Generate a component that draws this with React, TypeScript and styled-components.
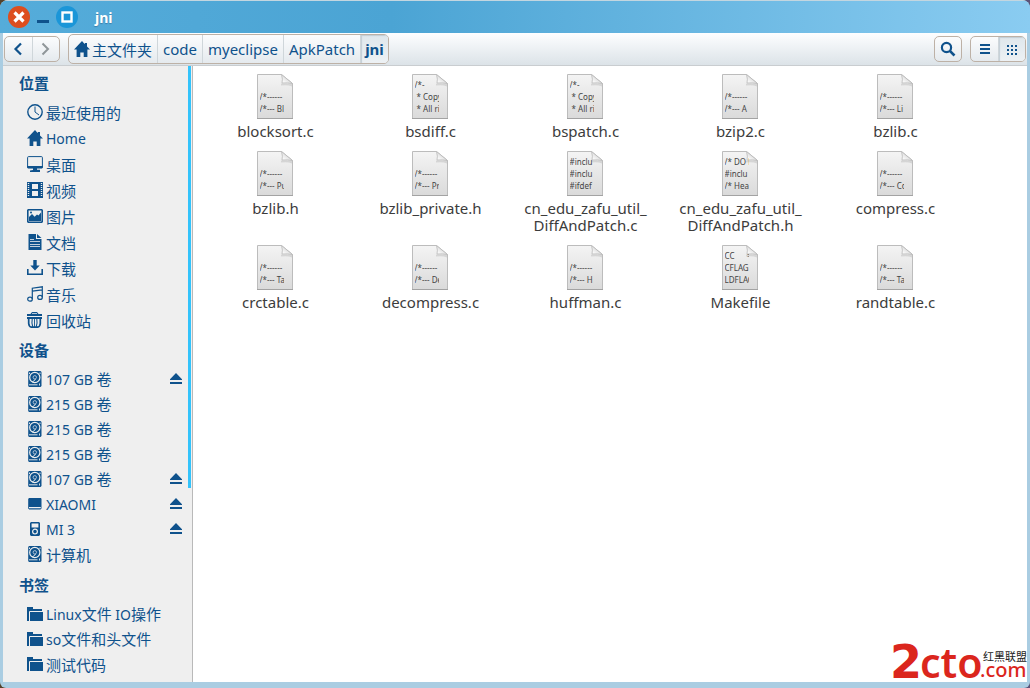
import React from 'react';
import styled, { createGlobalStyle, css } from 'styled-components';

const INK = '#0f528c';
const FRAME = '#aacde2';

const GlobalStyle = createGlobalStyle`
  * { box-sizing: border-box; }
  body {
    margin: 0;
    background: linear-gradient(90deg, #54422a, #5b5378);
    font-family: "Noto Sans", "Noto Sans CJK SC", sans-serif;
    font-size: 15px;
    color: ${INK};
  }
  button, a { font: inherit; color: inherit; text-decoration: none; }
  button { padding: 0; margin: 0; border: 0; background: none; }
  ul { list-style: none; margin: 0; padding: 0; }
  svg { display: block; flex: none; }
`;

const Window = styled.div`
  position: relative;
  display: flex;
  flex-direction: column;
  min-height: 100vh;
  background: ${FRAME};
  border-radius: 8px 8px 6px 6px;
  overflow: hidden;
`;

const TitleBar = styled.header`
  display: flex;
  align-items: center;
  height: 33px;
  padding-left: 8px;
  border-top: 1px solid #c3d6e0;
  background: linear-gradient(90deg, #55acda 0%, #4ba4d4 38%, #8accf1 100%);
`;

const WindowButton = styled.button<{ $bg?: string }>`
  display: flex;
  align-items: center;
  justify-content: center;
  width: 22px;
  height: 22px;
  border-radius: 50%;
  background: ${p => p.$bg || 'transparent'};
  & + & { margin-left: 2px; }
`;

const Title = styled.h1`
  margin: 0 0 0 17px;
  font-size: 14px;
  font-weight: 700;
  color: #fff;
  text-shadow: 0 1px 1px #3b7fa9;
`;

const Toolbar = styled.div`
  display: flex;
  align-items: center;
  height: 33px;
  margin: 0 3px;
  padding: 0 1px;
  border-bottom: 1px solid #c9cdd0;
  background: linear-gradient(#fdfeff, #dce3e8);
`;

const Group = styled.div<{ $tall?: boolean }>`
  display: flex;
  height: ${p => (p.$tall ? 30 : 26)}px;
  border: 1px solid #bdb1a6;
  border-radius: 5px;
  overflow: hidden;
  background: linear-gradient(#fbfcfd, #e5eaee);
`;

const Crumbs = styled.nav`
  margin: 0 auto 0 8px;
`;

const segment = css<{ $active?: boolean }>`
  display: flex;
  align-items: center;
  justify-content: center;
  & + & { border-left: 1px solid #cfd6da; }
  ${p => p.$active && css`
    background: linear-gradient(#dfe7ec, #edf1f4);
    box-shadow: inset 1px 1px 1px #c3ced5;
  `}
`;

const Crumb = styled.a<{ $active?: boolean }>`
  ${segment}
  gap: 2px;
  padding: 0 ${p => (p.$active ? 4 : 5)}px;
  font-weight: ${p => (p.$active ? 700 : 400)};
`;

const ToolButton = styled.button<{ $active?: boolean; $narrow?: boolean }>`
  ${segment}
  width: ${p => (p.$narrow ? 26 : 27)}px;
`;

const Tools = styled.div`
  display: flex;
  gap: 8px;
`;

const Body = styled.div`
  display: flex;
  flex: 1;
  margin: 0 3px 6px;
`;

const Sidebar = styled.aside`
  flex: none;
  width: 185px;
  background: #efefef;
`;

const ScrollTrack = styled.div`
  flex: none;
  width: 5px;
  background: #efefef;
  border-right: 1px solid #b9b9b9;
`;

const ScrollThumb = styled.div`
  width: 3px;
  height: calc(100% - 194px);
  background: #33c3fb;
`;

const Section = styled.section`
  &:last-child { padding-top: 1px; }
`;

const SectionTitle = styled.h2`
  margin: 0;
  padding: 2px 0 0 16px;
  font-size: 15px;
  line-height: 31px;
  font-weight: 700;
`;

const Row = styled.li<{ $tall?: boolean }>`
  display: flex;
  align-items: center;
  height: ${p => (p.$tall ? 26 : 25)}px;
  padding: 0 6px 0 24px;
`;

const RowLink = styled.a`
  display: flex;
  align-items: center;
  gap: 3px;
  flex: 1;
  font-size: 14px;
  line-height: 22px;
  white-space: pre;
`;

const RowText = styled.span`
  padding-top: 2px;
`;

const Han = styled.span`
  font-size: 15px;
`;

const Content = styled.main`
  flex: 1;
  padding: 8px 0 0 5px;
  background: #fff;
`;

const FileGrid = styled.ul`
  display: grid;
  grid-template-columns: repeat(auto-fill, 155px);
  row-gap: 11px;
`;

const FileItem = styled.li`
  display: flex;
  flex-direction: column;
  align-items: center;
  gap: 3px;
`;

const Page = styled.div`
  position: relative;
  width: 38px;
  height: 46px;
`;

const PageShape = styled.svg`
  position: absolute;
  inset: 0;
`;

const Preview = styled.div`
  position: relative;
  width: 24px;
  margin: 5px 0 0 3px;
  font-size: 8px;
  line-height: 12px;
  white-space: pre;
  overflow: hidden;
  color: #444;
`;

const FileName = styled.span`
  line-height: 17px;
  text-align: center;
  white-space: pre;
  color: #3c3c3c;
`;

const Watermark = styled.svg`
  position: absolute;
  right: 2px;
  bottom: 4px;
`;

const Svg = ({ children, w = 16, h = 16 }: { children: React.ReactNode; w?: number; h?: number }) => (
  <svg width={w} height={h} viewBox={`0 0 ${w} ${h}`} fill={INK} aria-hidden="true">{children}</svg>
);

const HomeIcon = () => (
  <Svg><path d="M8 0 0 8.6h2.6V16h3.7v-4.6h3.4V16h3.7V8.6H16L13 5.4V2h-2.2v1.2z" /></Svg>
);
const ClockIcon = () => (
  <Svg><g fill="none" stroke={INK}><circle cx="8" cy="8" r="7.2" strokeWidth="1.4" /><path d="M8 2.5V8l4 3" /></g></Svg>
);
const DesktopIcon = () => (
  <Svg>
    <rect x=".6" y=".6" width="14.8" height="11" rx="1" fill="none" stroke={INK} />
    <path d="M0 10h16v1.6l-1 .8H1l-1-.8zM6 12.4h4v1.4h3V16H3v-1.4l3-.6z" />
  </Svg>
);
const VideoIcon = () => (
  <Svg>
    <path fillRule="evenodd" d="M0 0h16v16H0zM5 2v5h6V2zM5 9v5h6V9z" />
    <path d="M1.500 1v14M14.500 1v14" stroke="#efefef" strokeWidth="1.4" strokeDasharray="1 1" />
  </Svg>
);
const PictureIcon = () => (
  <Svg>
    <path fillRule="evenodd" d="M1 1h14l1 1v12l-1 1H1l-1-1V2zM1.6 2.6v10.8h12.8V2.6z" />
    <path d="M2 13V9l3-3 2.6 2.8L10 6.4l1.4 1 2.6-3V13z" /><circle cx="4" cy="4.6" r="1" />
  </Svg>
);
const DocIcon = () => (
  <Svg>
    <path d="M1.5 0H9v5h5.5v11h-13zM10 0l4.5 4H10z" />
    <path d="M3 5.500h4M3 7.500h10M3 10.500h10M3 12.500h10" stroke="#efefef" strokeWidth=".8" />
  </Svg>
);
const DownloadIcon = () => (
  <Svg><path d="M6.3 0h3.4v5.5h3L8 10.5l-4.7-5h3zM0 9h1.6v4.4h12.8V9H16v6H0z" /></Svg>
);
const MusicIcon = () => (
  <Svg>
    <g fill="none" stroke={INK} strokeWidth="1.2">
      <path d="M5.3 13V2.2L15.3.8v10.4M5.3 5.2l10-1.4" />
      <ellipse cx="3" cy="13.2" rx="2.3" ry="2" /><ellipse cx="13" cy="11.4" rx="2.3" ry="2" />
    </g>
  </Svg>
);
const TrashIcon = () => (
  <Svg>
    <path fillRule="evenodd" d="M0 2h3.500L5 0h5l1.500 2H15v2H0zM5 1.300V2h5v-.7z" />
    <path d="M0 5h15v2H0z" />
    <g fill="none" stroke={INK}>
      <path d="M1.700 6.500v5q.3 3.500 3 3.700h5.600q2.700-.2 3-3.700v-5" strokeWidth="1.700" />
      <path d="M5.200 7q-.8 4 .6 8M9.800 7q.8 4-.6 8" strokeWidth="1.100" />
      <path d="M7.500 7v8" strokeWidth=".9" />
    </g>
  </Svg>
);
const DiskIcon = () => (
  <Svg>
    <path d="M2 0h11.500l1 1v14l-1 1H2l-.8-1V1z" />
    <circle cx="7.800" cy="6.500" r="5.100" fill="none" stroke="#efefef" strokeWidth="1.200" />
    <circle cx="7.800" cy="6.300" r="1.700" fill="none" stroke="#b9cbdc" strokeWidth=".9" />
    <path d="M8.500 8q-1 2.200-3.500 3M2 13.800h8.500M12.500 12.500v2M2.500 1.500v1.500M13 1.500v1.500" fill="none" stroke="#efefef" strokeWidth=".9" />
  </Svg>
);
const DriveIcon = () => (
  <Svg><path fillRule="evenodd" d="M2 2h12l.5 1v9.5l-1 1H2.2l-1-1V3zM2 11v1.2h11.8V11z" /></Svg>
);
const PlayerIcon = () => (
  <Svg>
    <path fillRule="evenodd" d="M4 1h8l1 1v12l-1 1H4l-1-1V2zM4.6 2.5v4h6.8v-4z" />
    <circle cx="8" cy="10.6" r="2.4" fill="none" stroke="#efefef" strokeWidth="1.2" />
  </Svg>
);
const FolderIcon = () => (
  <Svg>
    <path d="M0 1h6v2h9v12H0z" /><path d="M2.5 15V5.5H16" fill="none" stroke="#efefef" /><path d="M3 6h13v9H3z" />
  </Svg>
);
const EjectIcon = () => (
  <Svg w={12} h={12}><path d="M6 0l6 6.2V7H0v-.8zM0 9h12v2H0z" /></Svg>
);

const WhiteCross = () => (
  <svg width="12" height="12" viewBox="0 0 12 12" aria-hidden="true">
    <path d="M1.5 1.5l9 9M10.5 1.5l-9 9" stroke="#fff" strokeWidth="3.2" />
  </svg>
);

const icons = {
  clock: ClockIcon, home: HomeIcon, desktop: DesktopIcon, video: VideoIcon, picture: PictureIcon,
  doc: DocIcon, download: DownloadIcon, music: MusicIcon, trash: TrashIcon, disk: DiskIcon,
  drive: DriveIcon, player: PlayerIcon, folder: FolderIcon,
};

type Place = { name: string; icon: keyof typeof icons; tall?: boolean; eject?: boolean };

const sections: { title: string; items: Place[] }[] = [
  {
    title: '位置',
    items: [
      { name: '最近使用的', icon: 'clock', tall: true },
      { name: 'Home', icon: 'home', tall: true },
      { name: '桌面', icon: 'desktop', tall: true },
      { name: '视频', icon: 'video', tall: true },
      { name: '图片', icon: 'picture', tall: true },
      { name: '文档', icon: 'doc', tall: true },
      { name: '下载', icon: 'download', tall: true },
      { name: '音乐', icon: 'music', tall: true },
      { name: '回收站', icon: 'trash', tall: true },
    ],
  },
  {
    title: '设备',
    items: [
      { name: '107 GB 卷', icon: 'disk', eject: true },
      { name: '215 GB 卷', icon: 'disk' },
      { name: '215 GB 卷', icon: 'disk' },
      { name: '215 GB 卷', icon: 'disk' },
      { name: '107 GB 卷', icon: 'disk', eject: true },
      { name: 'XIAOMI', icon: 'drive', eject: true },
      { name: 'MI 3', icon: 'player', eject: true },
      { name: '计算机', icon: 'disk', tall: true },
    ],
  },
  {
    title: '书签',
    items: [
      { name: 'Linux文件 IO操作', icon: 'folder' },
      { name: 'so文件和头文件', icon: 'folder' },
      { name: '测试代码', icon: 'folder', tall: true },
    ],
  },
];

const banner = (tail: string) => `\n/*------\n/*--- ${tail}`;

const files: { name: string; preview: string }[] = [
  { name: 'blocksort.c', preview: banner('Bl') },
  { name: 'bsdiff.c', preview: '/*-\n * Copyr\n * All ri' },
  { name: 'bspatch.c', preview: '/*-\n * Copyr\n * All ri' },
  { name: 'bzip2.c', preview: banner('A') },
  { name: 'bzlib.c', preview: banner('Li') },
  { name: 'bzlib.h', preview: banner('Pu') },
  { name: 'bzlib_private.h', preview: banner('Pr') },
  { name: 'cn_edu_zafu_util_\nDiffAndPatch.c', preview: '#inclu\n#inclu\n#ifdef' },
  { name: 'cn_edu_zafu_util_\nDiffAndPatch.h', preview: '/* DO N\n#inclu\n/* Hea' },
  { name: 'compress.c', preview: banner('Co') },
  { name: 'crctable.c', preview: banner('Ta') },
  { name: 'decompress.c', preview: banner('De') },
  { name: 'huffman.c', preview: banner('H') },
  { name: 'Makefile', preview: 'CC      =\nCFLAG\nLDFLAG' },
  { name: 'randtable.c', preview: banner('Ta') },
];

// Han runs are set one size larger than Latin runs.
const Label = ({ text }: { text: string }) => (
  <RowText>
    {text.split(/([\u4e00-\u9fff]+)/).filter(Boolean).map((run, i) =>
      /[\u4e00-\u9fff]/.test(run) ? <Han key={i}>{run}</Han> : run)}
  </RowText>
);

const File = ({ name, preview }: { name: string; preview: string }) => (
  <FileItem>
    <Page>
      <PageShape width="38" height="46" viewBox="1 0 38 46" aria-hidden="true">
        <defs>
          <linearGradient id="paper" x1="0" y1="0" x2="0" y2="1">
            <stop offset="0" stopColor="#f4f4f4" /><stop offset="1" stopColor="#dadada" />
          </linearGradient>
          <linearGradient id="fold" x1="0" y1="1" x2="1" y2="0">
            <stop offset="0.1" stopColor="#fff" /><stop offset=".5" stopColor="#e2e2e2" />
          </linearGradient>
        </defs>
        <path d="M1.500.5h24l11 9v35h-35z" fill="url(#paper)" stroke="#bcbcbc" />
        <path d="M1 44.500h36" stroke="#a3a3a3" />
        <path d="M25 9.500h11v3q-4-2-11-1z" fill="#c4c4c4" opacity=".6" />
        <path d="M25.500.5q1.500 5 .5 8.500q6-.5 10.500.5z" fill="url(#fold)" stroke="#b9b9b9" strokeWidth=".8" />
      </PageShape>
      <Preview>{preview}</Preview>
    </Page>
    <FileName>{name}</FileName>
  </FileItem>
);

export default function App() {
  return (
    <Window>
      <GlobalStyle />
      <TitleBar>
        <WindowButton $bg="#dd4e1f" aria-label="Close"><WhiteCross /></WindowButton>
        <WindowButton aria-label="Minimize">
          <svg width="12" height="12" aria-hidden="true"><path d="M0 10.500h12" stroke={INK} strokeWidth="3" /></svg>
        </WindowButton>
        <WindowButton $bg="#1b96d8" aria-label="Maximize">
          <svg width="12" height="12" aria-hidden="true">
            <rect x="1.500" y="1.500" width="9" height="9" fill="none" stroke="#fff" strokeWidth="2.400" />
          </svg>
        </WindowButton>
        <Title>jni</Title>
      </TitleBar>

      <Toolbar>
        <Group>
          <ToolButton aria-label="Back">
            <Svg><path d="M10 2.500 4.500 8l5.500 5.500" fill="none" stroke={INK} strokeWidth="2.200" /></Svg>
          </ToolButton>
          <ToolButton aria-label="Forward">
            <Svg><path d="M4.500 2.500 10 8l-5.500 5.500" fill="none" stroke="#8f9699" strokeWidth="2" /></Svg>
          </ToolButton>
        </Group>
        <Crumbs aria-label="Path">
          <Group $tall>
            <Crumb href="#home"><HomeIcon />主文件夹</Crumb>
            <Crumb href="#code">code</Crumb>
            <Crumb href="#myeclipse">myeclipse</Crumb>
            <Crumb href="#apkpatch">ApkPatch</Crumb>
            <Crumb href="#jni" $active aria-current="page">jni</Crumb>
          </Group>
        </Crumbs>
        <Tools>
          <Group>
            <ToolButton $narrow aria-label="Search">
              <Svg>
                <g fill="none" stroke={INK}>
                  <circle cx="6.500" cy="6.500" r="4.600" strokeWidth="2.200" /><path d="M9.800 9.800l4.700 4.700" strokeWidth="2.600" />
                </g>
              </Svg>
            </ToolButton>
          </Group>
          <Group>
            <ToolButton aria-label="List view">
              <Svg><path d="M3 3h10v2H3zM3 7h10v2H3zM3 11h10v2H3z" /></Svg>
            </ToolButton>
            <ToolButton $active aria-label="Icon view">
              <Svg>
                <path d="M3 4h2v2H3zM7 4h2v2H7zM11 4h2v2h-2zM3 8h2v2H3zM7 8h2v2H7zM11 8h2v2h-2zM3 12h2v2H3zM7 12h2v2H7zM11 12h2v2h-2z" />
              </Svg>
            </ToolButton>
          </Group>
        </Tools>
      </Toolbar>

      <Body>
        <Sidebar>
          {sections.map(section => (
            <Section key={section.title}>
              <SectionTitle>{section.title}</SectionTitle>
              <ul>
                {section.items.map((item, i) => {
                  const Icon = icons[item.icon];
                  return (
                    <Row key={i} $tall={item.tall}>
                      <RowLink href="#"><Icon /><Label text={item.name} /></RowLink>
                      {item.eject && <button aria-label={`Eject ${item.name}`}><EjectIcon /></button>}
                    </Row>
                  );
                })}
              </ul>
            </Section>
          ))}
        </Sidebar>
        <ScrollTrack><ScrollThumb /></ScrollTrack>
        <Content>
          <FileGrid>
            {files.map(file => <File key={file.name} {...file} />)}
          </FileGrid>
        </Content>
      </Body>

      <Watermark width="136" height="42" viewBox="0 0 136 42" fill="#db261d" aria-label="2cto.com">
        <text x="-2" y="36" fontFamily="DejaVu Sans" fontWeight="700" fontSize="46">2</text>
        <text x="28" y="36" fontFamily="Noto Sans" fontWeight="600" fontSize="41">cto</text>
        <text x="88" y="35" fontFamily="Noto Sans" fontWeight="500" fontSize="20">.com</text>
        <text x="91" y="19" fontFamily="Noto Sans CJK SC" fontSize="11" fill="#222">红黑联盟</text>
      </Watermark>
    </Window>
  );
}
